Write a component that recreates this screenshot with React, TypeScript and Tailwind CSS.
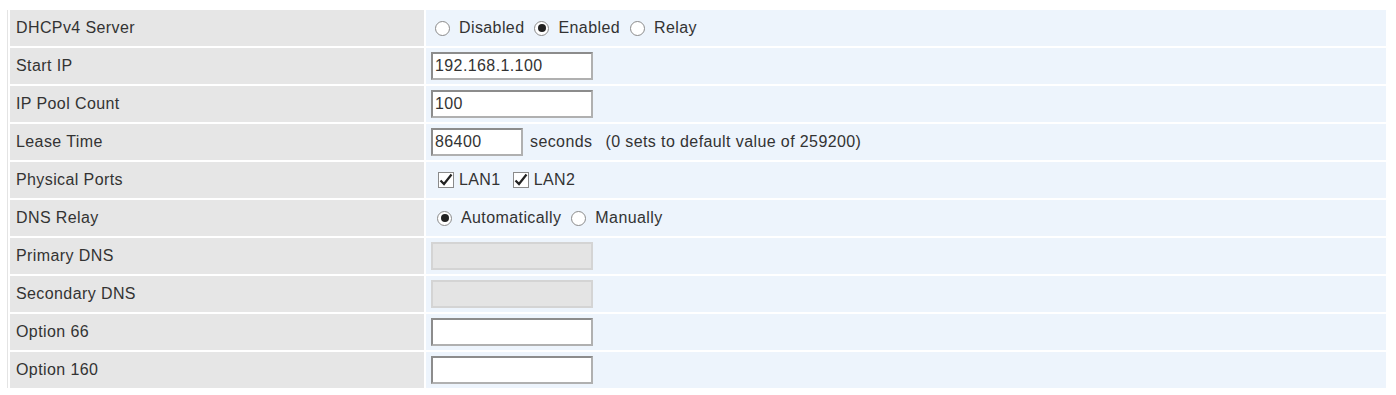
import React from "react";

const Radio = ({ checked }: { checked?: boolean }) => (
  <span className="inline-flex items-center justify-center w-[15px] h-[15px] rounded-full border border-[#8a8a8a] bg-white mr-[9px]">
    {checked && <span className="w-[8px] h-[8px] rounded-full bg-[#222]" />}
  </span>
);

const Check = () => (
  <span className="relative inline-flex items-center justify-center w-[16px] h-[16px] border border-[#8a8a8a] bg-white mr-[5px]">
    <svg width="14" height="14" viewBox="0 0 14 14">
      <path d="M1.5 7.5 L5 11 L12.5 1.5" stroke="#222" strokeWidth="2.2" fill="none" />
    </svg>
  </span>
);

const Input = ({ value, w = "w-[162px]", disabled }: { value?: string; w?: string; disabled?: boolean }) => (
  <div
    className={`${w} h-[28px] flex items-center px-[2px] text-[16px] tracking-[0.4px] text-[#333] ${
      disabled
        ? "bg-[#e4e4e4] border-2 border-[#d4d4d4]"
        : "bg-white border-2 border-t-[#8c8c8c] border-l-[#8c8c8c] border-r-[#b0b0b0] border-b-[#b0b0b0]"
    }`}
  >
    {value}
  </div>
);

const Row = ({ label, children }: { label: string; children: React.ReactNode }) => (
  <div className="flex gap-[2px] h-[36px]">
    <div className="w-[414px] bg-[#e6e6e6] flex items-center pl-[6px] text-[16px] tracking-[0.4px] text-[#333]">{label}</div>
    <div className="flex-1 bg-[#edf4fc] flex items-center pl-[5px] text-[16px] tracking-[0.4px] text-[#333]">{children}</div>
  </div>
);

export default function App() {
  return (
    <div className="w-[1396px] h-[395px] bg-white pt-[10px] pl-[7px] pr-[10px]" style={{ fontFamily: '"Liberation Sans", Arial, sans-serif' }}>
      <div className="border-l border-[#e4e4e4] pl-[2px]">
        <div className="flex flex-col gap-[2px]">
          <Row label="DHCPv4 Server">
            <span className="inline-flex items-center ml-[4px]">
              <Radio />Disabled<span className="w-[10px]" /><Radio checked />Enabled<span className="w-[10px]" /><Radio />Relay
            </span>
          </Row>
          <Row label="Start IP">
            <Input value="192.168.1.100" />
          </Row>
          <Row label="IP Pool Count">
            <Input value="100" />
          </Row>
          <Row label="Lease Time">
            <Input value="86400" w="w-[92px]" />
            <span className="ml-[7px]">seconds</span>
            <span className="ml-[13px]">(0 sets to default value of 259200)</span>
          </Row>
          <Row label="Physical Ports">
            <span className="inline-flex items-center ml-[7px]">
              <Check />LAN1<span className="w-[12px]" /><Check />LAN2
            </span>
          </Row>
          <Row label="DNS Relay">
            <span className="inline-flex items-center ml-[6px]">
              <Radio checked />Automatically<span className="w-[10px]" /><Radio />Manually
            </span>
          </Row>
          <Row label="Primary DNS">
            <Input disabled />
          </Row>
          <Row label="Secondary DNS">
            <Input disabled />
          </Row>
          <Row label="Option 66">
            <Input />
          </Row>
          <Row label="Option 160">
            <Input />
          </Row>
        </div>
      </div>
    </div>
  );
}
